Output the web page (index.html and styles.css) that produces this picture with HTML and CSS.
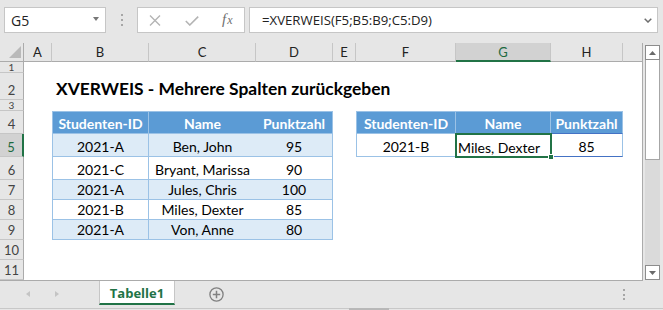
FILE: index.html
```html
<!DOCTYPE html>
<html lang="de">
<head>
    <meta charset="UTF-8">
    <meta name="viewport" content="width=device-width, initial-scale=1.0">
    <title>XVERWEIS - Mehrere Spalten zurückgeben</title>
    <link rel="stylesheet" href="styles.css">
</head>
<body>
    <div class="app">
        <!-- Name box + formula bar -->
        <div class="toolbar">
            <div class="name-box">
                <span class="name-value">G5</span>
                <span class="name-drop"></span>
            </div>
            <div class="grip"><span></span><span></span><span></span></div>
            <div class="fx-buttons">
                <svg class="fx-cancel" width="12" height="11" viewBox="0 0 12 11">
                    <path d="M1 0.5 L11 10.5 M11 0.5 L1 10.5" stroke="#b4b4b4" stroke-width="1.4" fill="none"/>
                </svg>
                <svg class="fx-enter" width="14" height="10" viewBox="0 0 14 10">
                    <path d="M0.8 5 L4.8 9 L13.2 0.6" stroke="#b4b4b4" stroke-width="1.6" fill="none"/>
                </svg>
                <span class="fx-label">f<span class="fx-x">x</span></span>
            </div>
            <div class="formula-input">
                <span class="formula-text">=XVERWEIS(F5;B5:B9;C5:D9)</span>
                <svg width="8" height="5" viewBox="0 0 8 5">
                    <path d="M0.7 0.7 L4 4 L7.3 0.7" stroke="#6e6e6e" stroke-width="1.5" fill="none"/>
                </svg>
            </div>
        </div>

        <div class="workarea">
            <div class="sheet">
                <div class="corner">
                    <svg width="24" height="18" viewBox="0 0 24 18">
                        <polygon points="9,15 21,15 21,3" fill="#b9b9b9"/>
                    </svg>
                </div>
                <div class="col-head">A</div>
                <div class="col-head">B</div>
                <div class="col-head">C</div>
                <div class="col-head">D</div>
                <div class="col-head">E</div>
                <div class="col-head">F</div>
                <div class="col-head selected">G</div>
                <div class="col-head">H</div>
                <div class="col-head filler"></div>

                <div class="row-head short">1</div>
                <div class="row-head">2</div>
                <div class="row-head short">3</div>
                <div class="row-head">4</div>
                <div class="row-head selected">5</div>
                <div class="row-head">6</div>
                <div class="row-head">7</div>
                <div class="row-head">8</div>
                <div class="row-head">9</div>
                <div class="row-head">10</div>
                <div class="row-head">11</div>

                <div class="title">XVERWEIS - Mehrere Spalten zurückgeben</div>

                <div class="data-table table-left">
                    <div class="tr head">
                        <div class="cell">Studenten-ID</div>
                        <div class="cell">Name</div>
                        <div class="cell">Punktzahl</div>
                    </div>
                    <div class="tr band">
                        <div class="cell">2021-A</div>
                        <div class="cell">Ben, John</div>
                        <div class="cell">95</div>
                    </div>
                    <div class="tr">
                        <div class="cell">2021-C</div>
                        <div class="cell">Bryant, Marissa</div>
                        <div class="cell">90</div>
                    </div>
                    <div class="tr band">
                        <div class="cell">2021-A</div>
                        <div class="cell">Jules, Chris</div>
                        <div class="cell">100</div>
                    </div>
                    <div class="tr">
                        <div class="cell">2021-B</div>
                        <div class="cell">Miles, Dexter</div>
                        <div class="cell">85</div>
                    </div>
                    <div class="tr band">
                        <div class="cell">2021-A</div>
                        <div class="cell">Von, Anne</div>
                        <div class="cell">80</div>
                    </div>
                </div>

                <div class="data-table table-right">
                    <div class="tr head">
                        <div class="cell">Studenten-ID</div>
                        <div class="cell">Name</div>
                        <div class="cell">Punktzahl</div>
                    </div>
                    <div class="tr result">
                        <div class="cell">2021-B</div>
                        <div class="cell active">Miles, Dexter<span class="sel-frame"><span class="sel-handle"></span></span></div>
                        <div class="cell linked">85</div>
                    </div>
                </div>
            </div>

            <div class="vscroll">
                <div class="sb-btn">
                    <svg width="7" height="4" viewBox="0 0 7 4"><polygon points="0,4 7,4 3.5,0" fill="#6a6a6a"/></svg>
                </div>
                <div class="sb-thumb"></div>
                <div class="sb-track"></div>
                <div class="sb-btn">
                    <svg width="7" height="4" viewBox="0 0 7 4"><polygon points="0,0 7,0 3.5,4" fill="#6a6a6a"/></svg>
                </div>
            </div>
        </div>

        <div class="tabbar">
            <div class="tabrow">
                <div class="tab-nav">
                    <span class="nav-left"></span>
                    <span class="nav-right"></span>
                </div>
                <div class="sheet-tab">Tabelle1</div>
                <div class="add-sheet">
                    <svg width="15" height="15" viewBox="0 0 15 15">
                        <circle cx="7.5" cy="7.5" r="6.6" stroke="#808080" stroke-width="1.3" fill="none"/>
                        <path d="M7.5 3.8 V11.2 M3.8 7.5 H11.2" stroke="#808080" stroke-width="1.5"/>
                    </svg>
                </div>
                <div class="tab-grip"><span></span><span></span><span></span></div>
            </div>
            <div class="hstrip"><span class="hthumb"></span></div>
        </div>
    </div>
</body>
</html>
```

FILE: styles.css
```css
* {
    margin: 0;
    padding: 0;
    box-sizing: border-box;
}

body {
    width: 663px;
    height: 310px;
    overflow: hidden;
    background: #e6e6e6;
    font-family: 'Open Sans', sans-serif;
    color: #000000;
}

.app {
    display: flex;
    flex-direction: column;
    height: 310px;
}

/* ---------- formula bar ---------- */

.toolbar {
    height: 43px;
    display: flex;
    align-items: flex-start;
    padding-top: 7px;
    padding-left: 4px;
}

.name-box {
    width: 102px;
    height: 26px;
    background: #ffffff;
    border: 1px solid #c6c6c6;
    display: flex;
    align-items: center;
    justify-content: space-between;
    padding: 0 6px 0 6px;
}

.name-value {
    font-size: 14px;
    color: #222222;
}

.name-drop {
    border-left: 3px solid transparent;
    border-right: 3px solid transparent;
    border-top: 4px solid #777777;
    margin-top: -2px;
}

.grip {
    width: 31px;
    height: 26px;
    display: flex;
    flex-direction: column;
    align-items: center;
    justify-content: center;
    gap: 3px;
}

.grip span,
.tab-grip span {
    width: 2px;
    height: 2px;
    background: #a6a6a6;
}

.fx-buttons {
    width: 108px;
    height: 26px;
    background: #ffffff;
    border: 1px solid #c6c6c6;
    display: flex;
    align-items: center;
    padding-left: 11px;
}

.fx-cancel {
    margin-top: 1px;
}

.fx-enter {
    margin-left: 24px;
    margin-top: 2px;
}

.fx-label {
    margin-left: 23px;
    font-family: 'Liberation Serif', serif;
    font-style: italic;
    font-size: 15px;
    color: #707070;
    margin-top: -2px;
}

.fx-x {
    font-size: 12px;
    margin-left: 1px;
}

.formula-input {
    margin-left: 4px;
    width: 409px;
    height: 26px;
    background: #ffffff;
    border: 1px solid #c6c6c6;
    display: flex;
    align-items: center;
    justify-content: space-between;
    padding: 0 5px 0 12px;
}

.formula-text {
    font-size: 13.2px;
    color: #222222;
}

/* ---------- sheet ---------- */

.workarea {
    display: flex;
    height: 238px;
}

.sheet {
    width: 643px;
    background: #ffffff;
    border-right: 1px solid #ababab;
    border-bottom: 1px solid #ababab;
    display: grid;
    grid-template-columns: 24px 28px 97px 107px 77px 23px 100px 95px 72px 1fr;
    grid-template-rows: 19px 11px 27px 11px 23px 23px 23px 20px 20px 20px 20px 20px;
    font-family: Lato, sans-serif;
}

.corner {
    background: #e6e6e6;
    border-right: 1px solid #ababab;
    border-bottom: 1px solid #ababab;
}

.corner svg {
    display: block;
}

.col-head {
    background: #e6e6e6;
    border-right: 1px solid #c6c6c6;
    border-bottom: 1px solid #ababab;
    display: flex;
    align-items: center;
    justify-content: center;
    font-size: 13px;
    color: #222222;
}

.col-head.filler {
    border-right: none;
}

.col-head.selected {
    background: #d2d2d2;
    border-bottom: 2px solid #217346;
    color: #1d6a3f;
}

.row-head {
    grid-column: 1;
    background: #e6e6e6;
    border-right: 1px solid #ababab;
    border-bottom: 1px solid #c6c6c6;
    display: flex;
    align-items: flex-end;
    justify-content: center;
    font-size: 13px;
    line-height: 18px;
    color: #444444;
    overflow: hidden;
}

.row-head.short {
    align-items: center;
    font-size: 10px;
    line-height: 10px;
}

.row-head.selected {
    background: #d2d2d2;
    border-right: 2px solid #217346;
    color: #1d6a3f;
}

.title {
    grid-column: 3 / 10;
    grid-row: 3;
    align-self: end;
    padding-left: 4px;
    font-size: 17.4px;
    font-weight: 700;
    line-height: 22px;
    white-space: nowrap;
}

/* ---------- tables ---------- */

.data-table {
    display: grid;
    font-size: 14px;
}

.table-left {
    grid-column: 3 / 6;
    grid-row: 5 / 11;
    grid-template-columns: 97px 107px 77px;
    grid-template-rows: 23px 23px 23px 20px 20px 20px;
}

.table-right {
    grid-column: 7 / 10;
    grid-row: 5 / 7;
    grid-template-columns: 100px 95px 72px;
    grid-template-rows: 23px 23px;
}

.tr {
    display: contents;
}

.cell {
    display: flex;
    align-items: flex-end;
    justify-content: center;
    line-height: 19px;
    white-space: nowrap;
    border-bottom: 1px solid #9bc2e6;
}

.head .cell {
    background: #5b9bd5;
    color: #ffffff;
    font-weight: 700;
    border-top: 1px solid #9bc2e6;
}

.band .cell {
    background: #ddebf7;
}

.tr .cell:nth-child(1) {
    border-left: 1px solid #9bc2e6;
    border-right: 1px solid #9bc2e6;
}

.tr .cell:nth-child(3) {
    border-right: 1px solid #9bc2e6;
}

.table-right .head .cell:nth-child(2) {
    border-right: 1px solid #9bc2e6;
}

.table-right .head .cell:nth-child(3) {
    border-bottom-color: #4472c4;
}

.cell.active {
    position: relative;
    justify-content: flex-start;
    padding-left: 2px;
    border-bottom: none;
}

.sel-frame {
    position: absolute;
    top: -1px;
    left: -1px;
    right: -1px;
    bottom: -1px;
    border: 2px solid #217346;
}

.sel-handle {
    position: absolute;
    right: -4px;
    bottom: -4px;
    width: 6px;
    height: 6px;
    background: #217346;
    border: 1px solid #ffffff;
}

.cell.linked {
    border-right: 1px solid #4472c4;
    border-bottom: 1px solid #4472c4;
}

/* ---------- vertical scrollbar ---------- */

.vscroll {
    width: 20px;
    padding: 2px 3px 1px 2px;
    display: flex;
    flex-direction: column;
}

.sb-btn {
    height: 15px;
    background: #ffffff;
    border: 1px solid #8c8c8c;
    display: flex;
    align-items: center;
    justify-content: center;
}

.sb-btn svg {
    display: block;
}

.sb-thumb {
    height: 100px;
    background: #ffffff;
    border: 1px solid #a6a6a6;
    border-top: none;
}

.sb-track {
    flex: 1;
    background: #dadada;
}

/* ---------- sheet tabs ---------- */

.tabbar {
    height: 29px;
    display: flex;
    flex-direction: column;
}

.tabrow {
    height: 27px;
    display: flex;
    align-items: flex-start;
}

.tab-nav {
    width: 99px;
    display: flex;
    gap: 25px;
    padding: 10px 0 0 26px;
}

.nav-left {
    border-top: 3px solid transparent;
    border-bottom: 3px solid transparent;
    border-right: 4px solid #c4c4c4;
}

.nav-right {
    border-top: 3px solid transparent;
    border-bottom: 3px solid transparent;
    border-left: 4px solid #c4c4c4;
}

.sheet-tab {
    width: 76px;
    height: 24px;
    background: #ffffff;
    border-left: 1px solid #c6c6c6;
    border-right: 1px solid #c6c6c6;
    border-bottom: 2px solid #217346;
    display: flex;
    align-items: center;
    justify-content: center;
    padding-top: 2px;
    font-size: 13px;
    font-weight: 700;
    color: #217346;
}

.add-sheet {
    margin: 6px 0 0 34px;
}

.add-sheet svg {
    display: block;
}

.tab-grip {
    margin: 8px 38px 0 auto;
    display: flex;
    flex-direction: column;
    gap: 2.5px;
}

.hstrip {
    height: 2px;
    border-top: 1px solid #c8c8c8;
    display: flex;
}

.hthumb {
    margin-left: 349px;
    width: 40px;
    height: 2px;
    margin-top: -1px;
    background: #b8b8b8;
}
```
